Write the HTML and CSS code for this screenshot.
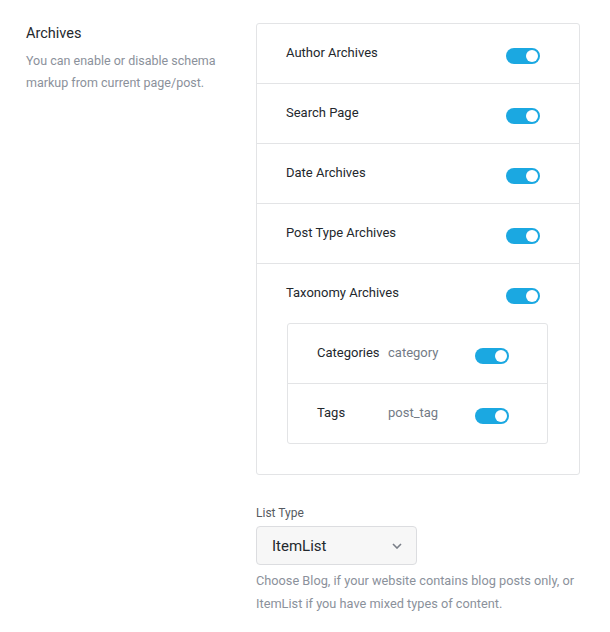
FILE: index.html
```html
<!DOCTYPE html>
<html lang="en">
<head>
    <meta charset="UTF-8">
    <meta name="viewport" content="width=device-width, initial-scale=1.0">
    <title>Archives Schema Settings</title>
    <link rel="stylesheet" href="styles.css">
</head>
<body>
    <div class="settings-section">
        <!-- Section Intro -->
        <div class="section-info">
            <h3 class="section-title">Archives</h3>
            <p class="section-desc">You can enable or disable schema markup from current page/post.</p>
        </div>

        <div class="section-fields">
            <!-- Archive Toggles -->
            <div class="option-card">
                <div class="option-row">
                    <span class="option-label">Author Archives</span>
                    <span class="toggle on"></span>
                </div>
                <div class="option-row">
                    <span class="option-label">Search Page</span>
                    <span class="toggle on"></span>
                </div>
                <div class="option-row">
                    <span class="option-label">Date Archives</span>
                    <span class="toggle on"></span>
                </div>
                <div class="option-row">
                    <span class="option-label">Post Type Archives</span>
                    <span class="toggle on"></span>
                </div>
                <div class="option-row has-children">
                    <div class="option-head">
                        <span class="option-label">Taxonomy Archives</span>
                        <span class="toggle on"></span>
                    </div>
                    <div class="sub-card">
                        <div class="sub-row">
                            <span class="sub-label">Categories</span>
                            <span class="sub-slug">category</span>
                            <span class="toggle on"></span>
                        </div>
                        <div class="sub-row">
                            <span class="sub-label">Tags</span>
                            <span class="sub-slug">post_tag</span>
                            <span class="toggle on"></span>
                        </div>
                    </div>
                </div>
            </div>

            <!-- List Type -->
            <div class="field">
                <label class="field-label">List Type</label>
                <div class="select">
                    <span class="select-value">ItemList</span>
                    <svg class="select-arrow" width="10" height="6" viewBox="0 0 10 6">
                        <path d="M1 1l4 4 4-4" fill="none" stroke="#7a7f88" stroke-width="1.6"/>
                    </svg>
                </div>
                <p class="field-help">Choose Blog, if your website contains blog posts only, or ItemList if you have mixed types of content.</p>
            </div>
        </div>
    </div>
</body>
</html>
```

FILE: styles.css
```css
/* Color Palette */
:root {
    --text-dark: #23282d;
    --text-muted: #8b919b;
    --border-color: #e3e4e6;
    --toggle-color: #1ba8e1;
    --white-color: #FFFFFF;
}

/* General Body Style */
body {
    font-family: Roboto, "Liberation Sans", sans-serif;
    background-color: var(--white-color);
    color: var(--text-dark);
    margin: 0;
    padding: 23px 0 0 26px;
}

/* Section Layout */
.settings-section {
    display: flex;
}

.section-info {
    width: 230px;
}

.section-title {
    font-size: 14.5px;
    font-weight: 400;
    margin: 0 0 5px;
    line-height: 22px;
}

.section-desc {
    font-size: 12.5px;
    line-height: 22px;
    color: var(--text-muted);
    margin: 0;
}

.section-fields {
    width: 324px;
}

/* Option Card */
.option-card {
    border: 1px solid var(--border-color);
    border-radius: 3px;
}

.option-row,
.option-head {
    display: flex;
    justify-content: space-between;
    align-items: flex-start;
    height: 60px;
    padding: 0 39px 0 29px;
    box-sizing: border-box;
}

.option-row {
    border-bottom: 1px solid var(--border-color);
}

.option-row:last-child {
    border-bottom: none;
}

.option-row.has-children {
    display: block;
    height: auto;
    padding: 0 0 30px;
}

.option-head {
    height: 59px;
}

.option-label {
    font-size: 13px;
    line-height: 16px;
    margin-top: 21px;
}

/* Sub Card */
.sub-card {
    margin: 0 31px 0 30px;
    border: 1px solid var(--border-color);
    border-radius: 3px;
}

.sub-row {
    display: flex;
    align-items: flex-start;
    height: 60px;
    box-sizing: border-box;
    padding: 0 38px 0 29px;
    border-bottom: 1px solid var(--border-color);
}

.sub-row:last-child {
    border-bottom: none;
    height: 59px;
}

.sub-label {
    width: 71px;
    font-size: 13px;
    line-height: 16px;
    margin-top: 21px;
}

.sub-slug {
    flex: 1;
    font-size: 13px;
    line-height: 16px;
    margin-top: 21px;
    color: #737b86;
}

/* Toggle Switch */
.toggle {
    position: relative;
    width: 34px;
    height: 16px;
    margin-top: 24px;
    border-radius: 8px;
    background-color: #ccd0d4;
    flex-shrink: 0;
}

.toggle::after {
    content: "";
    position: absolute;
    top: 2px;
    left: 2px;
    width: 12px;
    height: 12px;
    border-radius: 50%;
    background-color: var(--white-color);
}

.toggle.on {
    background-color: var(--toggle-color);
}

.toggle.on::after {
    left: 20px;
}

/* List Type Field */
.field {
    margin-top: 30px;
}

.field-label {
    display: block;
    font-size: 12px;
    line-height: 16px;
    color: #555a61;
    margin-bottom: 5px;
}

.select {
    display: flex;
    align-items: center;
    justify-content: space-between;
    width: 161px;
    height: 39px;
    padding: 0 14px 0 15px;
    box-sizing: border-box;
    background-color: #f7f7f7;
    border: 1px solid #dcdde0;
    border-radius: 4px;
}

.select-value {
    font-size: 15px;
    color: var(--text-dark);
}

.field-help {
    width: 340px;
    font-size: 12.75px;
    line-height: 23px;
    color: var(--text-muted);
    margin: 4px 0 0;
}
```
